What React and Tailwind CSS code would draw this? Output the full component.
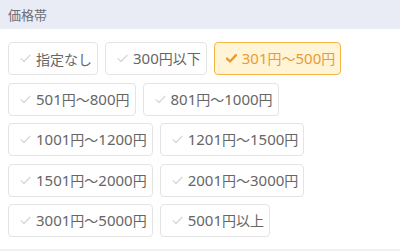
const prices = [
  ["指定なし", "300円以下", "301円〜500円"],
  ["501円〜800円", "801円〜1000円"],
  ["1001円〜1200円", "1201円〜1500円"],
  ["1501円〜2000円", "2001円〜3000円"],
  ["3001円〜5000円", "5001円以上"],
];

const selected = "301円〜500円";

function Check({ active }) {
  return (
    <svg width="11" height="9" viewBox="0 0 11 9" className="shrink-0">
      <path
        d="M1 4.6 L4 7.5 L10 1.2"
        fill="none"
        stroke={active ? "#ec9a2c" : "#d8d8d8"}
        strokeWidth={active ? 2.4 : 1.3}
        strokeLinecap="round"
        strokeLinejoin="round"
      />
    </svg>
  );
}

// digits are drawn a little larger than the kana/kanji, as in the design
function Label({ text }) {
  return (
    <span className="whitespace-nowrap">
      {text.split(/(\d+)/).map((part, i) =>
        /^\d+$/.test(part) ? (
          <span
            key={i}
            className="text-[15px]"
            style={{ fontFamily: '"Noto Sans", sans-serif' }}
          >
            {part}
          </span>
        ) : (
          <span key={i}>{part}</span>
        )
      )}
    </span>
  );
}

function Chip({ label }) {
  const active = label === selected;
  return (
    <button
      className={
        active
          ? "flex items-center gap-[5px] h-[33px] pl-[11px] pr-[5px] rounded-[4px] border border-[#f5b645] bg-[#fff4d6] text-[#e99b35] text-[14px] leading-none"
          : "flex items-center gap-[5px] h-[33px] pl-[11px] pr-[5px] rounded-[4px] border border-[#e4e4e4] bg-white text-[#666666] text-[14px] leading-none"
      }
    >
      <Check active={active} />
      <Label text={label} />
    </button>
  );
}

export default function App() {
  return (
    <div
      className="w-[400px] h-[251px] bg-white overflow-hidden flex flex-col"
      style={{ fontFamily: '"Noto Sans CJK JP", "Noto Sans", sans-serif' }}
    >
      <div className="h-[29px] bg-[#e9ecf4] flex items-center px-2 text-[13px] text-[#6e6e78]">
        価格帯
      </div>
      <div className="flex flex-col gap-[7.5px] pl-2 pt-[13px]">
        {prices.map((row, i) => (
          <div key={i} className="flex gap-[7px]">
            {row.map((p) => (
              <Chip key={p} label={p} />
            ))}
          </div>
        ))}
      </div>
      <div className="mt-auto h-[2px] bg-[#f1f1f3]" />
    </div>
  );
}
